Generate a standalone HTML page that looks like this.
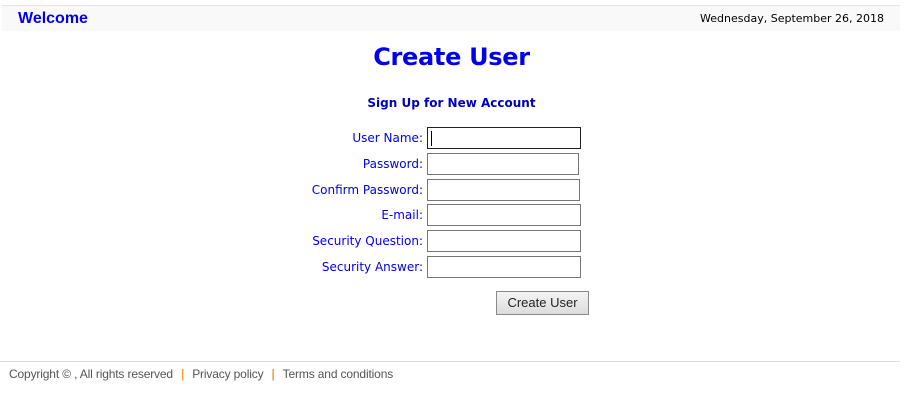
<!DOCTYPE html>
<html><head><style>
body{margin:0;width:913px;height:407px;background:#fff;font-family:"DejaVu Sans","Liberation Sans",sans-serif;position:relative;overflow:hidden}
.hdr{position:absolute;left:2px;top:5px;width:898px;height:25px;background:#f9f9f9;border-top:1px solid #e4e4e4}
.wel{position:absolute;left:16px;top:4px;font:bold 16px "Liberation Sans",sans-serif;color:#0000ee}
.date{position:absolute;right:16px;top:6px;font-size:11px;color:#000}
h1{position:absolute;left:0;width:903px;top:43px;margin:0;text-align:center;font:bold 24px "DejaVu Sans",sans-serif;color:#0000ee;letter-spacing:-0.3px}
.sub{position:absolute;left:0;width:903px;top:96px;text-align:center;font:bold 12px "DejaVu Sans",sans-serif;color:#0000c0}
.lbl{position:absolute;right:490px;font-size:12px;color:#0000ee;white-space:nowrap}
.in{position:absolute;left:427px;width:151px;height:20px;border:1px solid #767676;box-sizing:content-box}
.btn{position:absolute;left:496px;top:291px;width:91px;height:22px;border:1px solid #8a8a8a;background:linear-gradient(#f4f4f4,#dcdcdc);font:13px "Liberation Sans",sans-serif;color:#222;text-align:center;line-height:22px}
.foot{position:absolute;left:0;top:361px;width:900px;border-top:1px solid #ddd}
.ft{position:absolute;left:9px;top:367px;font:12px "Liberation Sans",sans-serif;color:#555;letter-spacing:-0.15px}
.ft b{color:#f0a040;font-weight:bold;margin:0 8px}
</style></head><body>
<div class="hdr"><div class="wel">Welcome</div><div class="date">Wednesday, September 26, 2018</div></div>
<h1>Create User</h1>
<div class="sub">Sign Up for New Account</div>
<div class="lbl" style="top:131px">User Name:</div>
<div class="in" style="top:127px;border:1px solid #222;width:152px"><div style="position:absolute;left:3px;top:3px;width:1px;height:15px;background:#000"></div></div>
<div class="lbl" style="top:157px">Password:</div>
<div class="in" style="top:153px;width:150px"></div>
<div class="lbl" style="top:183px">Confirm Password:</div>
<div class="in" style="top:179px"></div>
<div class="lbl" style="top:208px">E-mail:</div>
<div class="in" style="top:204px;width:152px"></div>
<div class="lbl" style="top:234px">Security Question:</div>
<div class="in" style="top:230px;width:152px"></div>
<div class="lbl" style="top:260px">Security Answer:</div>
<div class="in" style="top:256px;width:152px"></div>
<div class="btn">Create User</div>
<div class="foot"></div>
<div class="ft">Copyright © , All rights reserved<b>|</b>Privacy policy<b>|</b>Terms and conditions</div>
</body></html>
